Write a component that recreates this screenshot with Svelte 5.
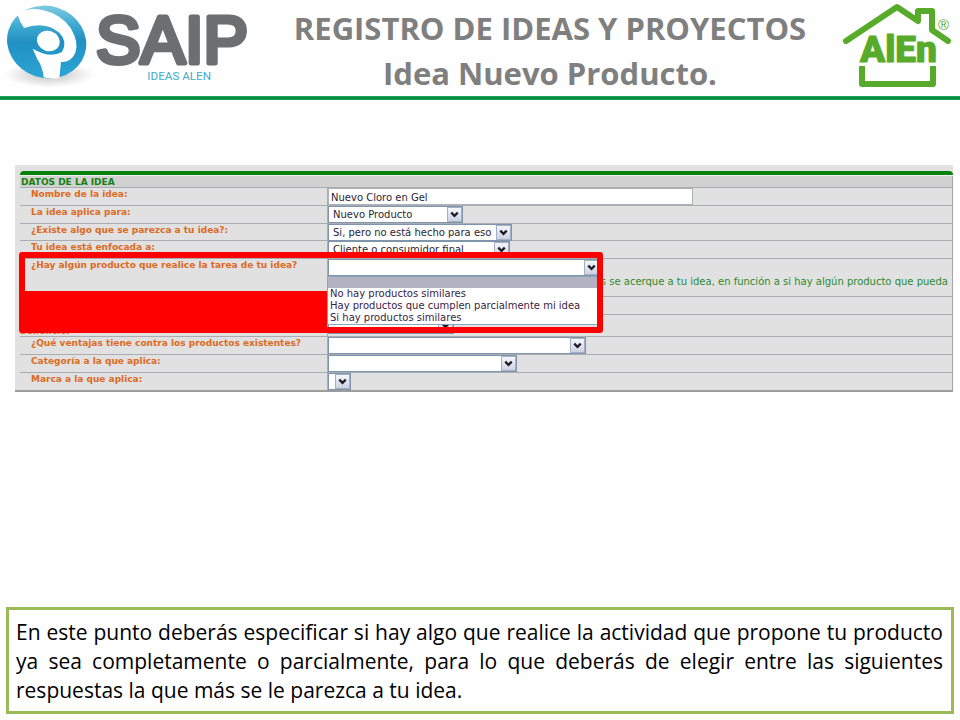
<script>
  const ideaFields = [
    { id: 'nombre', label: 'Nombre de la idea:', kind: 'text', value: 'Nuevo Cloro en Gel', width: 365, height: 18 },
    { id: 'aplica', label: 'La idea aplica para:', kind: 'select', value: 'Nuevo Producto', width: 135, height: 18 },
    { id: 'existe', label: '¿Existe algo que se parezca a tu idea?:', kind: 'select', value: 'Si, pero no está hecho para eso', width: 184, height: 17 },
    { id: 'enfoque', label: 'Tu idea está enfocada a:', kind: 'select', value: 'Cliente o consumidor final', width: 182, height: 18 },
    { id: 'tarea', label: '¿Hay algún producto que realice la tarea de tu idea?', kind: 'open', width: 272, height: 38 },
    { id: 'similar', label: '', kind: 'none', height: 18 },
    { id: 'beneficio', label: 'beneficio:', kind: 'select', value: '', width: 126, height: 22, low: true },
    { id: 'ventajas', label: '¿Qué ventajas tiene contra los productos existentes?', kind: 'select', value: '', width: 258, height: 18 },
    { id: 'categoria', label: 'Categoría a la que aplica:', kind: 'select', value: '', width: 189, height: 18 },
    { id: 'marca', label: 'Marca a la que aplica:', kind: 'select', value: '', width: 23, height: 18 }
  ];
  const answers = [
    '',
    'No hay productos similares',
    'Hay productos que cumplen parcialmente mi idea',
    'Si hay productos similares'
  ];
  let answer = $state('');
</script>

{#snippet dropdown(f)}
  <div class="combo" class:sunk={f.low} style:width="{f.width}px">
    {#if f.kind === 'open'}
      <select id={f.id} bind:value={answer}>
        {#each answers as a}<option value={a}>{a}</option>{/each}
      </select>
    {:else}
      <select id={f.id}><option>{f.value}</option></select>
    {/if}
    <span class="arrow" aria-hidden="true">
      <svg viewBox="0 0 14 14"><path d="M3.5 5 L7 8.5 L10.5 5" /></svg>
    </span>
  </div>
{/snippet}

<div class="slide">
  <header>
    <svg class="saip" viewBox="0 0 810 288" role="img" aria-label="SAIP Ideas Alen">
      <defs>
        <linearGradient id="orb" x1="0" y1="0" x2="0.4" y2="1">
          <stop offset="0" stop-color="#a5dcec" />
          <stop offset="0.4" stop-color="#3da9d0" />
          <stop offset="0.6" stop-color="#218fc2" />
          <stop offset="1" stop-color="#2aa3d3" />
        </linearGradient>
        <radialGradient id="shade">
          <stop offset="0" stop-color="#999" stop-opacity="0.6" />
          <stop offset="1" stop-color="#999" stop-opacity="0" />
        </radialGradient>
      </defs>
      <ellipse cx="148" cy="224" rx="132" ry="38" fill="url(#shade)" />
      <ellipse cx="140" cy="126" rx="120" ry="108" transform="rotate(18 140 126)" fill="url(#orb)" />
      <path d="M72 84 Q58 64 52 42 Q84 20 128 30 Q182 42 212 84 Q238 128 226 158 Q214 187 183 186 L178 234 Q154 238 131 232 Q128 200 112 178 L98 146 Q150 176 186 156 Q204 124 178 98 Q135 62 72 84 Z" fill="#fff" />
      <ellipse cx="145" cy="123" rx="35" ry="30" transform="rotate(20 145 123)" fill="#fff" />
      <text x="288" y="188" class="saip-name">SAIP</text>
      <text x="442" y="241" class="saip-tag">IDEAS ALEN</text>
    </svg>
    <h1>REGISTRO DE IDEAS Y PROYECTOS<br />Idea Nuevo Producto.</h1>
    <svg class="alen" viewBox="0 0 130 96" role="img" aria-label="AlEn">
      <path d="M16 41 L67 7 L88 21 V11 H102 V30 L118 41" />
      <path d="M32 66 V84 H103 V66" class="base" />
      <text x="30" y="62" class="alen-name">AlEn</text>
      <text x="108" y="30" class="reg">®</text>
    </svg>
  </header>

  <main>
    <form class="panel" onsubmit={(e) => e.preventDefault()}>
      <div class="bar"></div>
      <h2>DATOS DE LA IDEA</h2>
      {#each ideaFields as f}
        <div class="row" style:height="{f.height}px">
          <div class="name" class:low={f.low}>
            {#if f.label}<label for={f.id}>{f.label}</label>{/if}
          </div>
          <div class="field">
            {#if f.kind === 'text'}
              <input id={f.id} type="text" value={f.value} style:width="{f.width}px" />
            {:else if f.kind !== 'none'}
              {@render dropdown(f)}
            {/if}
            {#if f.kind === 'open'}
              <p class="hint">más se acerque a tu idea, en función a si hay algún producto que pueda</p>
            {/if}
          </div>
        </div>
      {/each}

      <ul class="choices">
        {#each answers as a}
          <li>
            <button type="button" class:current={a === answer} aria-label={a || 'Sin respuesta'} onclick={() => (answer = a)}>{a}</button>
          </li>
        {/each}
      </ul>
      <div class="focus"><div class="mask"></div></div>
    </form>
  </main>

  <p class="note">
    En este punto deberás especificar si hay algo que realice la actividad que propone tu producto ya sea
    completamente o parcialmente, para lo que deberás de elegir entre las siguientes respuestas la que más
    se le parezca a tu idea.
  </p>
</div>

<style>
  :global(body) {
    margin: 0;
    background: #fefefe;
  }
  .slide {
    box-sizing: border-box;
    min-height: 100vh;
    display: flex;
    flex-direction: column;
    padding-bottom: 6px;
  }
  header {
    display: flex;
    justify-content: space-between;
    height: 100px;
    background: linear-gradient(#14a452 0 1px, #0c8a44 1px 3px, #14a452 3px) 0 96px / 100% 4px no-repeat;
  }
  .saip {
    width: 270px;
    height: 96px;
    flex: none;
  }
  .saip-name {
    font: 200px 'Liberation Sans', sans-serif;
    fill: #6d6e70;
    stroke: #6d6e70;
    stroke-width: 15px;
    stroke-linejoin: round;
  }
  .saip-tag {
    font: 35px Roboto, 'Liberation Sans', sans-serif;
    fill: #45abc9;
  }
  .alen {
    width: 130px;
    height: 96px;
    flex: none;
  }
  .alen path {
    fill: none;
    stroke: #58ab2a;
    stroke-width: 6;
    stroke-linejoin: round;
    stroke-linecap: round;
  }
  .alen .base {
    stroke-linecap: butt;
  }
  .alen-name {
    font: 900 37px Roboto, sans-serif;
    fill: #58ab2a;
    stroke: #58ab2a;
    stroke-width: 1px;
    stroke-linejoin: round;
  }
  .reg {
    font: 15px 'Liberation Sans', sans-serif;
    fill: #58ab2a;
  }
  h1 {
    margin: 6px 0 0;
    font: bold 31px/45px 'Open Sans', sans-serif;
    text-align: center;
    white-space: nowrap;
    color: #7f7f7f;
  }
  main {
    padding: 65px 7px 0 15px;
  }
  .panel {
    position: relative;
    padding: 6px 0 0 5px;
    background: #e1e1e1;
    border-bottom: 2px solid #9c9c9c;
    font-family: 'DejaVu Sans', Verdana, sans-serif;
  }
  .bar {
    height: 4px;
    background: #078307;
    border-radius: 4px 4px 0 0;
    border-bottom: 1px solid #f0f0f0;
  }
  h2 {
    margin: 0;
    height: 11px;
    padding-left: 1px;
    font: bold 9px/13px 'DejaVu Sans', Verdana, sans-serif;
    color: #128212;
    background: #d1d1d1;
    border-right: 1px solid #a5a5a5;
  }
  .row {
    box-sizing: border-box;
    display: flex;
    border-top: 1px solid #a9adb2;
    border-right: 1px solid #a5a5a5;
  }
  .name {
    box-sizing: border-box;
    display: flex;
    align-items: flex-start;
    width: 308px;
    flex: none;
    padding-left: 11px;
    border-right: 1px solid #a5adb5;
    font-size: 9px;
    font-weight: bold;
    line-height: 13px;
    color: #dc6a1f;
    white-space: nowrap;
  }
  .name.low {
    align-items: flex-end;
    padding-left: 0;
    line-height: 9px;
  }
  .field {
    flex: 1;
    min-width: 0;
  }
  input {
    box-sizing: border-box;
    display: block;
    height: 17px;
    padding: 1px 2px 0;
    border: 1px solid #a9b1b9;
    border-radius: 0;
    background: #fff;
    font: 10px 'DejaVu Sans', Verdana, sans-serif;
    color: #2b2433;
  }
  .combo {
    box-sizing: border-box;
    position: relative;
    height: 17px;
    border: 1px solid #7f95ab;
    background: #fff;
  }
  .combo.sunk {
    margin-top: 2px;
  }
  select {
    appearance: none;
    display: block;
    width: 100%;
    height: 15px;
    padding: 0 0 0 4px;
    border: 0;
    border-radius: 0;
    background: #fff;
    font: 10px 'DejaVu Sans', Verdana, sans-serif;
    color: #2b2433;
  }
  .arrow {
    position: absolute;
    top: 0;
    right: 0;
    width: 13px;
    height: 13px;
    border: 1px solid #a3b0c6;
    background: linear-gradient(#f4f6fb, #cdd2e2);
    pointer-events: none;
  }
  .arrow svg {
    display: block;
    width: 13px;
    height: 13px;
  }
  .arrow path {
    fill: none;
    stroke: #1c1c24;
    stroke-width: 2.4;
  }
  .hint {
    margin: 0;
    padding-right: 4px;
    text-align: right;
    font-size: 10px;
    line-height: 11px;
    color: #2d8a2d;
    white-space: nowrap;
  }
  .choices {
    box-sizing: border-box;
    position: absolute;
    top: 111px;
    left: 312px;
    width: 272px;
    margin: 0;
    padding: 0;
    list-style: none;
    background: #fff;
    border: 1px solid #8fa5ba;
  }
  .choices button {
    display: block;
    width: 100%;
    height: 12px;
    padding: 0 2px;
    border: 0;
    background: none;
    text-align: left;
    font: 10px/12px 'DejaVu Sans', Verdana, sans-serif;
    color: #3a2344;
    white-space: nowrap;
  }
  .choices .current {
    height: 11px;
    background: #b2b2c2;
  }
  .focus {
    box-sizing: border-box;
    position: absolute;
    top: 87px;
    left: 4px;
    width: 584px;
    height: 81px;
    border: 6px solid #f00;
    border-radius: 3px;
    pointer-events: none;
  }
  .mask {
    width: 302px;
    height: 36px;
    margin-top: 33px;
    background: #f00;
  }
  .note {
    margin: auto 6px 0;
    padding: 8px 8px 6px 7px;
    border: 3px solid #9bbb59;
    background: #fff;
    font: 21px/29px 'Open Sans', sans-serif;
    text-align: justify;
    color: #000;
  }
</style>
